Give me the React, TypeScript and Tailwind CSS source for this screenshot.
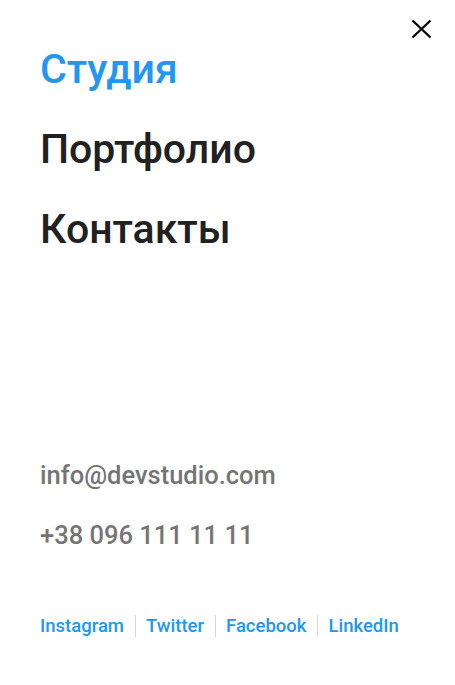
const nav = [
  { label: "Студия", active: true },
  { label: "Портфолио", active: false },
  { label: "Контакты", active: false },
];

const socials = ["Instagram", "Twitter", "Facebook", "LinkedIn"];

export default function App() {
  return (
    <div
      className="relative w-[455px] h-[685px] bg-white flex flex-col px-10"
      style={{ fontFamily: "Roboto, 'Noto Sans', sans-serif" }}
    >
      <button className="absolute top-[19px] right-[23px] text-black">
        <svg width="21" height="20" viewBox="0 0 21 20" fill="none" stroke="currentColor" strokeWidth="2.3">
          <path d="M1.5 1.5 L19.5 18.5 M19.5 1.5 L1.5 18.5" />
        </svg>
      </button>

      {/* Меню */}
      <nav className="flex flex-col pt-[29px]">
        {nav.map((item) => (
          <a
            key={item.label}
            className={
              "text-[41px] leading-[80px] font-medium " +
              (item.active ? "text-[#2196f3]" : "text-[#212121]")
            }
          >
            {item.label}
          </a>
        ))}
      </nav>

      {/* Контакты */}
      <div className="flex flex-col mt-[176px] text-[25.5px] leading-[60px] font-medium text-[#757575]">
        <span>info@devstudio.com</span>
        <span>+38 096 111 11 11</span>
      </div>

      {/* Соцсети */}
      <div className="flex items-center mt-[50px] text-[18.5px] leading-[22px] font-medium text-[#2196f3]">
        {socials.map((s, i) => (
          <div key={s} className="flex items-center">
            {i > 0 && <span className="w-px h-[22px] bg-[#d6d6d6] ml-[11px] mr-[10px]" />}
            <a>{s}</a>
          </div>
        ))}
      </div>
    </div>
  );
}
